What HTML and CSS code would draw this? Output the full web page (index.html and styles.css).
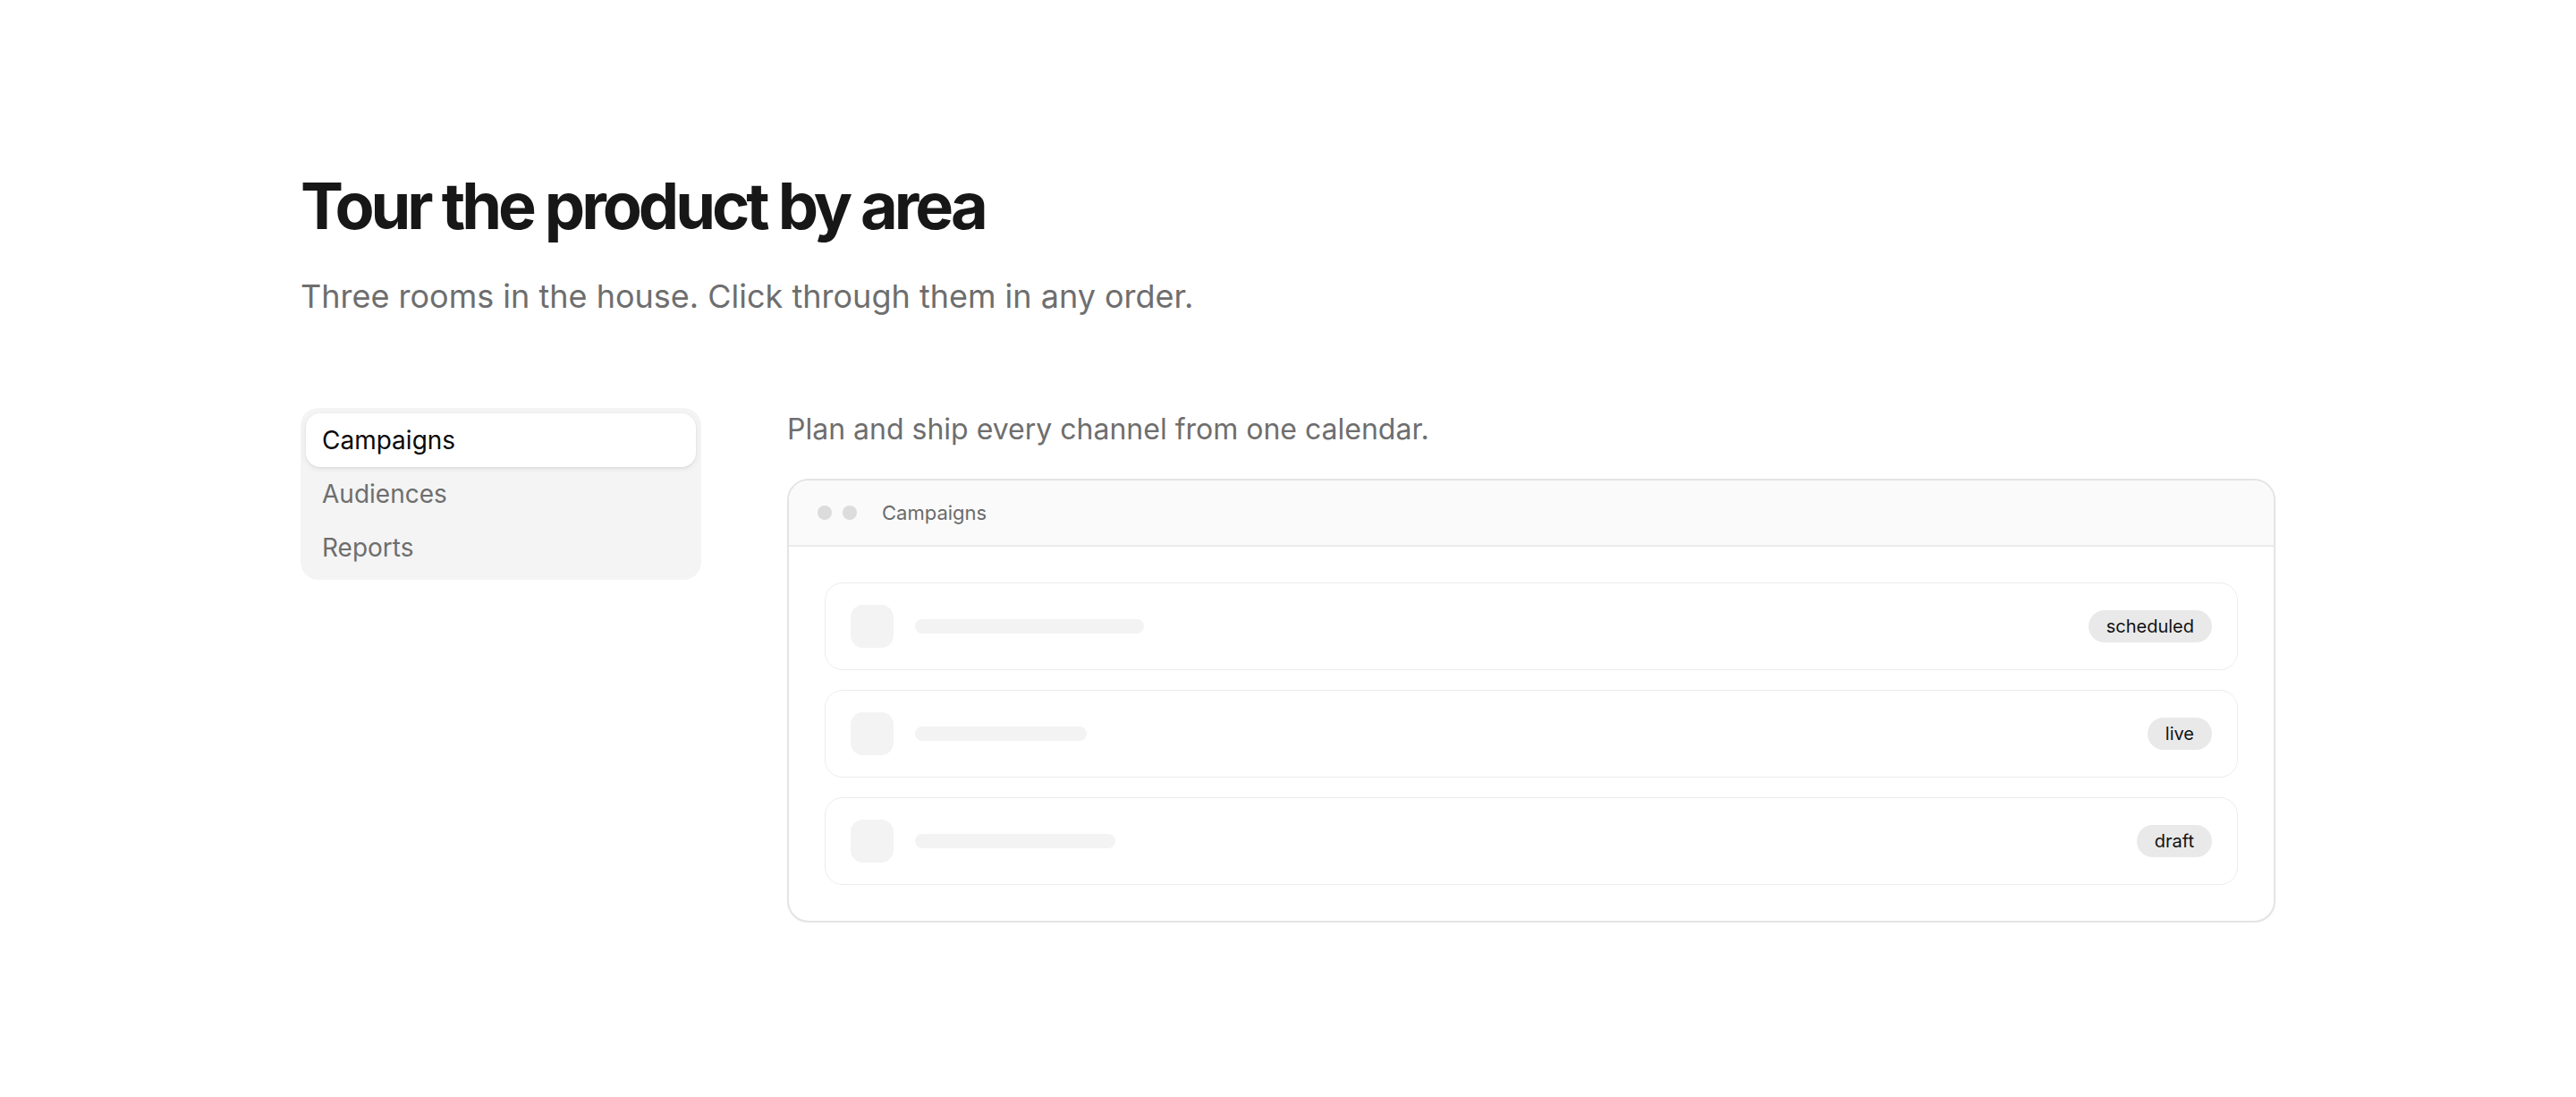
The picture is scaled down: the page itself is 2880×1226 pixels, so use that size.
FILE: index.html
```html
<!DOCTYPE html>
<html lang="en">
<head>
<meta charset="utf-8">
<title>Tour the product by area</title>
<link rel="stylesheet" href="styles.css">
</head>
<body>
<section class="tour">
  <h1 class="tour-title">Tour the product by area</h1>
  <p class="tour-sub">Three rooms in the house. Click through them in any order.</p>
  <div class="tour-grid">
    <nav class="tabs">
      <button class="tab is-active">Campaigns</button>
      <button class="tab">Audiences</button>
      <button class="tab">Reports</button>
    </nav>
    <div class="panel">
      <p class="panel-desc">Plan and ship every channel from one calendar.</p>
      <div class="window">
        <div class="window-bar">
          <span class="dot"></span>
          <span class="dot"></span>
          <span class="window-title">Campaigns</span>
        </div>
        <div class="window-body">
          <div class="row">
            <span class="thumb"></span>
            <span class="line" style="width:256px"></span>
            <span class="pill">scheduled</span>
          </div>
          <div class="row">
            <span class="thumb"></span>
            <span class="line" style="width:192px"></span>
            <span class="pill">live</span>
          </div>
          <div class="row">
            <span class="thumb"></span>
            <span class="line" style="width:224px"></span>
            <span class="pill">draft</span>
          </div>
        </div>
      </div>
    </div>
  </div>
</section>
</body>
</html>
```
FILE: styles.css
```css
* { box-sizing: border-box; }
html, body { margin: 0; padding: 0; background: #ffffff; }
body {
  font-family: Inter, "Noto Sans", "Liberation Sans", sans-serif;
  color: #171717;
}
.tour {
  width: 2208px;
  margin: 0 auto;
  padding-top: 190px;
}
.tour-title {
  margin: 0 0 34px;
  font-size: 72px;
  line-height: 80px;
  font-weight: 700;
  letter-spacing: -0.056em;
  color: #171717;
}
.tour-sub {
  margin: 0;
  font-size: 36px;
  line-height: 54px;
  color: #6e6e6e;
}
.tour-grid {
  margin-top: 98px;
  display: grid;
  grid-template-columns: 448px 1fr;
  gap: 96px;
  align-items: start;
}
.tabs {
  display: flex;
  flex-direction: column;
  padding: 6px;
  background: #f4f4f4;
  border-radius: 20px;
}
.tab {
  display: block;
  width: 100%;
  height: 60px;
  padding: 0 18px;
  border: 0;
  background: transparent;
  text-align: left;
  font-family: inherit;
  font-size: 28px;
  line-height: 60px;
  color: #6e6e6e;
  border-radius: 16px;
  cursor: pointer;
}
.tab.is-active {
  background: #ffffff;
  color: #0a0a0a;
  box-shadow: 0 2px 6px rgba(0, 0, 0, 0.08), 0 1px 2px rgba(0, 0, 0, 0.05);
}
.panel-desc {
  margin: 0 0 31px;
  font-size: 32px;
  line-height: 48px;
  color: #6e6e6e;
}
.window {
  border: 2px solid #e4e4e4;
  border-radius: 24px;
  overflow: hidden;
  background: #ffffff;
  box-shadow: 0 1px 2px rgba(0, 0, 0, 0.04);
}
.window-bar {
  display: flex;
  align-items: center;
  gap: 12px;
  height: 74px;
  padding: 0 32px;
  background: #fafafa;
  border-bottom: 2px solid #ebebeb;
}
.dot {
  width: 16px;
  height: 16px;
  border-radius: 50%;
  background: #dcdcdc;
}
.window-title {
  margin-left: 16px;
  font-size: 22px;
  color: #6b6b6b;
}
.window-body {
  display: flex;
  flex-direction: column;
  gap: 22px;
  padding: 40px;
}
.row {
  display: flex;
  align-items: center;
  padding: 24px 28px;
  border: 1px solid #ececec;
  border-radius: 20px;
}
.thumb {
  width: 48px;
  height: 48px;
  border-radius: 14px;
  background: #f3f3f3;
  flex: none;
}
.line {
  height: 16px;
  margin-left: 24px;
  border-radius: 8px;
  background: #f3f3f3;
}
.pill {
  margin-left: auto;
  padding: 0 20px;
  height: 36px;
  line-height: 36px;
  border-radius: 18px;
  background: #e9e9e9;
  font-size: 20px;
  font-weight: 400;
  color: #111111;
}
```
